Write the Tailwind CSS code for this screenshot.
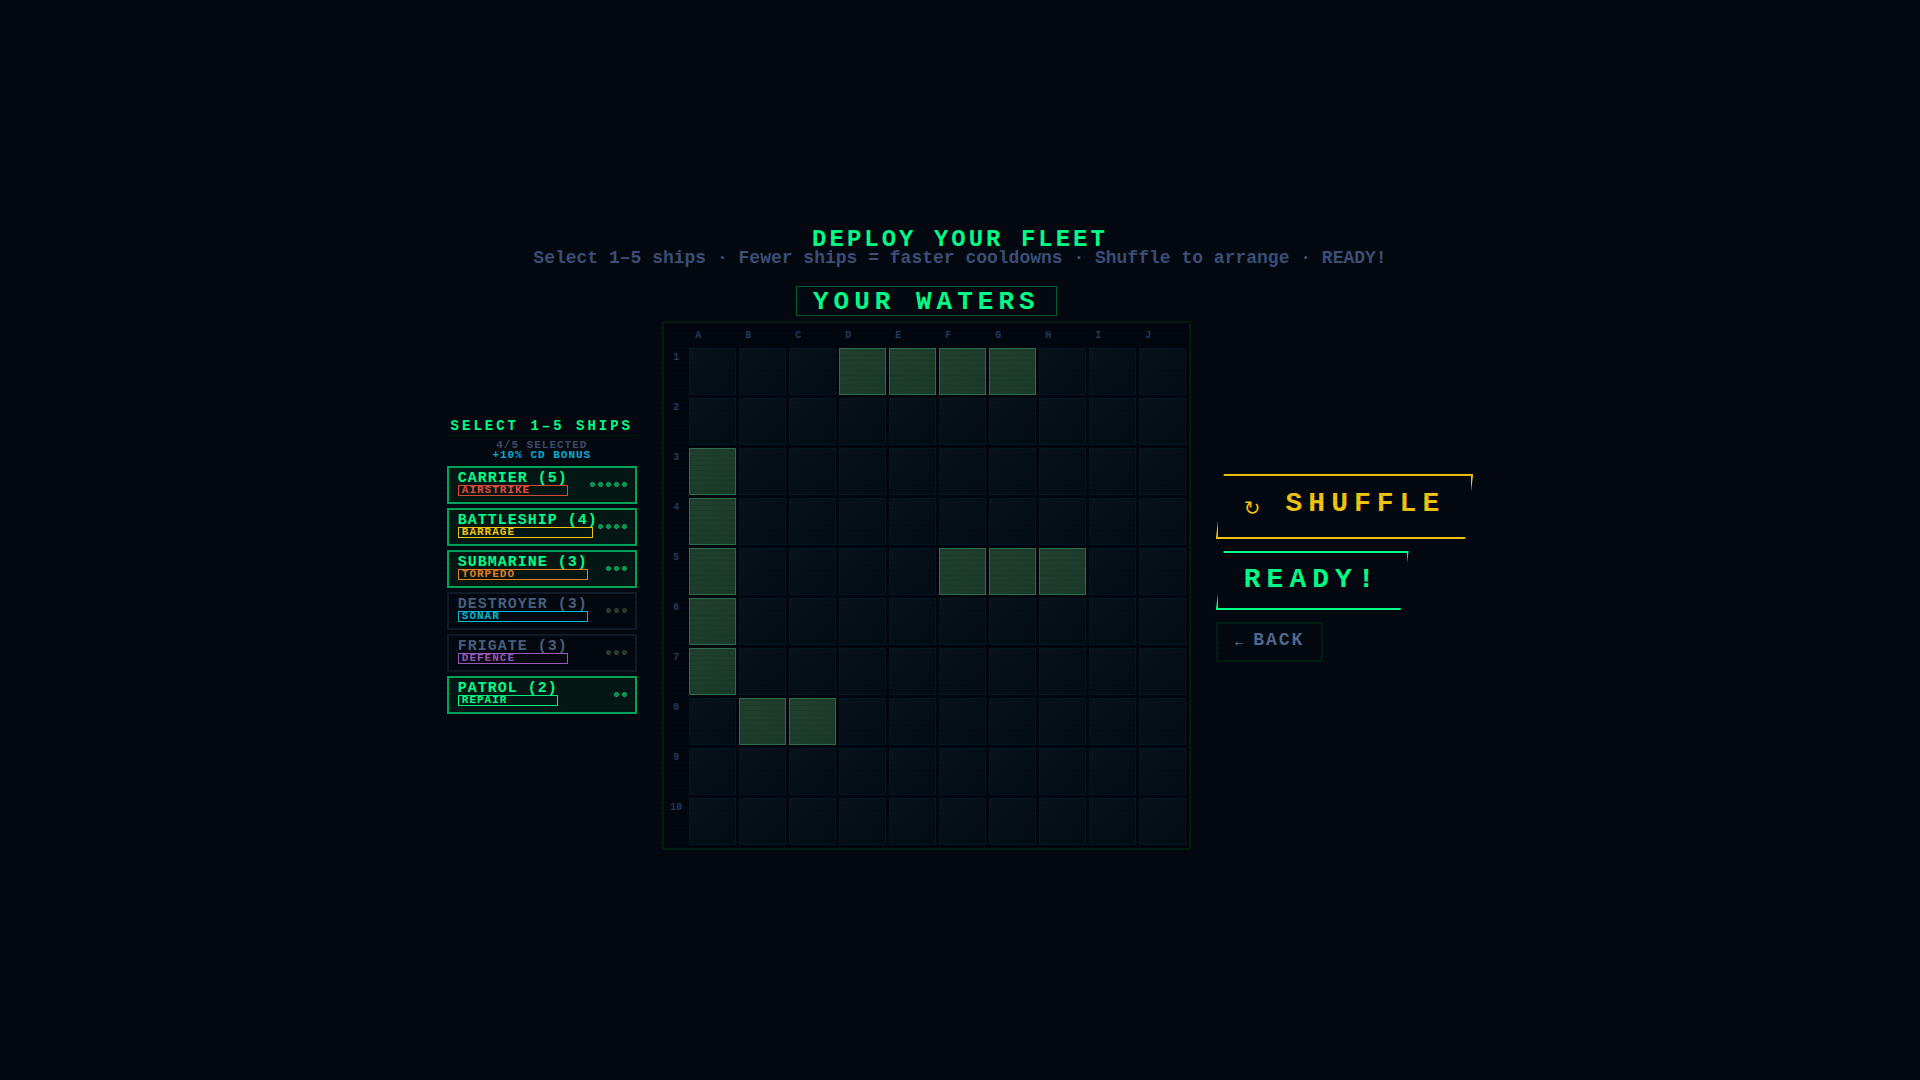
<!DOCTYPE html>
<html lang="en">
<head>
  <meta charset="UTF-8" />
  <meta name="viewport" content="width=device-width, initial-scale=1.0"/>
  <title>Deploy Your Fleet</title>
  <script src="https://cdn.jsdelivr.net/npm/@tailwindcss/browser@4"></script>
</head>
<body class="bg-[#040810] font-['Liberation_Mono',monospace] font-bold text-[#00ff88]">

  <main class="min-h-screen flex flex-col items-center justify-center">

    <!-- Header -->
    <h1 class="text-2xl leading-5 font-bold tracking-[3px]">DEPLOY YOUR FLEET</h1>
    <p class="text-lg leading-4 text-[#3a5078] mb-5">Select 1–5 ships · Fewer ships = faster cooldowns · Shuffle to arrange · READY!</p>

    <div class="flex items-center justify-center gap-[25px]">

      <!-- Ship selection -->
      <section class="w-[190px] flex flex-col pb-0.5">
        <h2 class="text-sm leading-[10px] pb-1 border-b border-[#021a12] tracking-[3px] text-center whitespace-nowrap">SELECT 1–5 SHIPS</h2>
        <p class="mt-1 text-[11px] leading-[10px] tracking-[1px] text-center text-[#3d4d68]">4/5 SELECTED</p>
        <p class="text-[11px] leading-[10px] tracking-[1px] text-center text-[#00b0d8] mb-1.5">+10% CD BONUS</p>
        <div id="ships" class="flex flex-col gap-1"></div>
      </section>

      <!-- Board -->
      <section class="flex flex-col items-center gap-[5px]">
        <h2 class="border border-[#045f39] px-4 pt-0.5 text-[26px] leading-[26px] tracking-[5px]">YOUR WATERS</h2>
        <div id="board" class="grid grid-cols-[19px_repeat(10,47px)] grid-rows-[19px_repeat(10,47px)] gap-[3px] p-[3px] border-2 border-[#021c10] bg-[#01060f]"></div>
      </section>

      <!-- Actions -->
      <section class="flex flex-col items-start gap-3">
        <button class="flex items-center gap-[19px] border-2 border-[#f1c40f] text-[#f1c40f] px-[26px] pt-3 pb-[17px] text-[28px] leading-8 tracking-[6px] [clip-path:polygon(8px_0,100%_0,calc(100%-8px)_100%,0_100%)]"><span class="font-['DejaVu_Sans'] text-xl leading-5 font-normal pt-2">↻</span><span>SHUFFLE</span></button>
        <button class="border-2 border-[#00ff88] px-[26px] pt-[13px] pb-[14px] text-[28px] leading-7 tracking-[6px] [clip-path:polygon(8px_0,100%_0,calc(100%-8px)_100%,0_100%)]">READY!</button>
        <button class="flex items-center gap-2 border-2 border-[#021c10] text-[#4f698a] px-[17px] pt-1.5 pb-2.5 text-lg leading-4 tracking-[2px]"><span class="font-['DejaVu_Sans'] text-[10px] leading-3 font-normal pt-2">←</span><span>BACK</span></button>
      </section>

    </div>
  </main>

  <!-- Scanlines -->
  <div class="fixed inset-0 pointer-events-none bg-[repeating-linear-gradient(0deg,transparent_0_4px,rgba(0,0,0,0.08)_4px_5px)]"></div>

  <script>
    const ships = [
      { name: "CARRIER", size: 5, ability: "AIRSTRIKE", color: "text-[#e74c3c]", on: true },
      { name: "BATTLESHIP", size: 4, ability: "BARRAGE", color: "text-[#f1c40f]", on: true },
      { name: "SUBMARINE", size: 3, ability: "TORPEDO", color: "text-[#e67e22]", on: true },
      { name: "DESTROYER", size: 3, ability: "SONAR", color: "text-[#00bcd4]", on: false },
      { name: "FRIGATE", size: 3, ability: "DEFENCE", color: "text-[#9b59b6]", on: false },
      { name: "PATROL", size: 2, ability: "REPAIR", color: "text-[#00ff88]", on: true },
    ];

    document.getElementById("ships").innerHTML = ships.map(s => `
      <button class="w-full flex items-center justify-between gap-[5px] border-2 pl-[9px] pr-2 h-[38px] text-left ${s.on ? "border-[#00a35c] bg-[#041715] text-[#00ff88]" : "border-[#111b28] text-[#48607c]"}">
        <span class="flex flex-col min-w-0">
          <span class="text-[15px] leading-3 tracking-[1px] whitespace-nowrap">${s.name} (${s.size})</span>
          <span class="border px-[3px] text-[11px] leading-[9px] tracking-[1px] ${s.color}">${s.ability}</span>
        </span>
        <span class="flex gap-[3px] shrink-0">${`<i class="size-[5px] rounded-full border ${s.on ? "border-[#00c46c] bg-[#0a8a52]" : "border-[#35483a] bg-[#28382b]"}"></i>`.repeat(s.size)}</span>
      </button>`).join("");

    const taken = ["D1", "E1", "F1", "G1", "A3", "A4", "A5", "A6", "A7", "F5", "G5", "H5", "B8", "C8"];
    const cols = "ABCDEFGHIJ".split("");
    const label = t => `<div class="w-[19px] h-[19px] text-center text-[10px] leading-[19px] text-[#213c5e]">${t}</div>`;

    let html = "<div></div>" + cols.map(label).join("");
    for (let r = 1; r <= 10; r++) {
      html += label(r);
      cols.forEach(c => {
        html += taken.includes(c + r)
          ? `<div class="border border-[#2a6e4b] bg-linear-135 from-[#21402e] to-[#1a3a29]"></div>`
          : `<div class="border border-[#041624] bg-linear-135 from-[#0a131b] to-[#030b14]"></div>`;
      });
    }
    document.getElementById("board").innerHTML = html;
  </script>

</body>
</html>
